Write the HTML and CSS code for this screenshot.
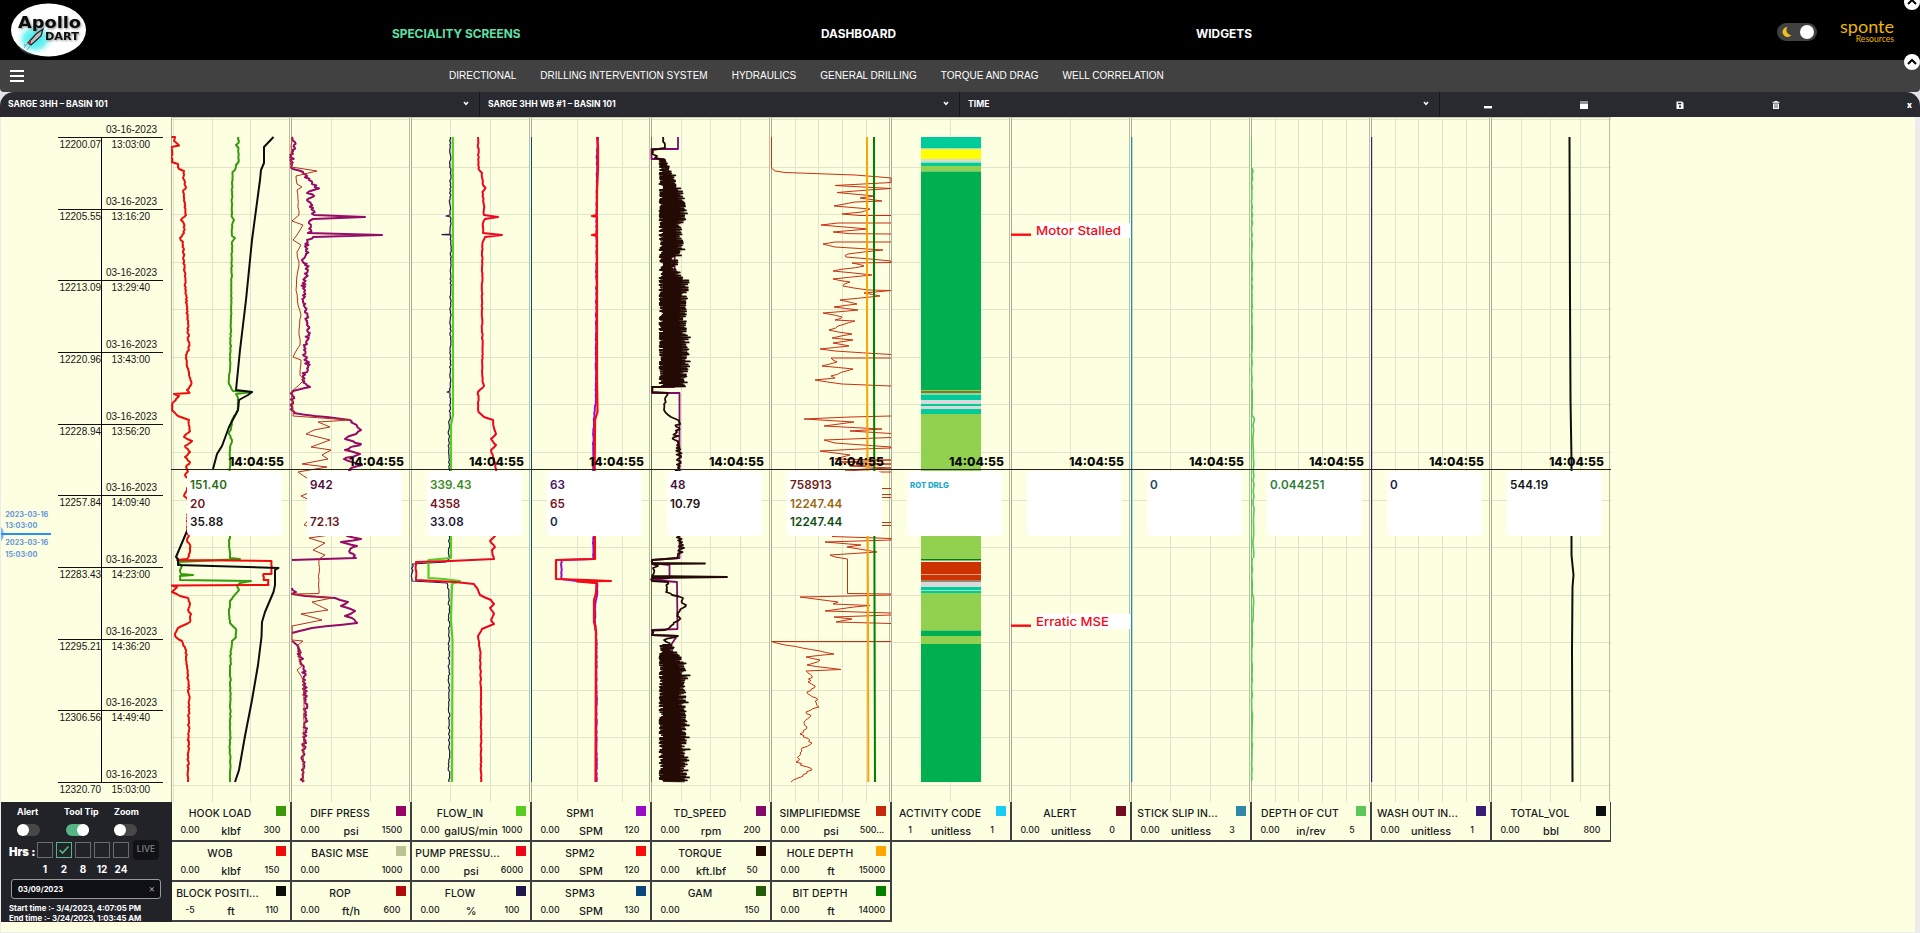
FILE: index.html
```html
<!DOCTYPE html>
<html lang="en">
<head>
<meta charset="utf-8">
<title>Apollo Dart - Drilling Intervention System</title>
<link rel="stylesheet" href="styles.css">
</head>
<body>
<header class="topbar">
  <svg class="logo" width="76" height="54" viewBox="0 0 76 54">
    <defs><radialGradient id="glow"><stop offset="0" stop-color="#2fe8ec"/><stop offset=".55" stop-color="#7df2f4"/><stop offset="1" stop-color="#fff" stop-opacity="0"/></radialGradient></defs>
    <ellipse cx="38.500" cy="27" rx="37.500" ry="26.500" fill="#fff"/>
    <ellipse cx="25" cy="36" rx="20" ry="17" fill="url(#glow)"/>
    <text class="logo-name" x="8" y="25" textLength="63" lengthAdjust="spacingAndGlyphs">Apollo</text>
    <text class="logo-sub" x="35" y="36.500" textLength="34" lengthAdjust="spacingAndGlyphs">DART</text>
    <path d="M33 26l-2 7-10 9-3-2 8-9z" fill="#bbb" stroke="#222" stroke-width="1.2"/>
    <path d="M21 37l-3 3 3 1z" fill="#d22"/>
    <path d="M17 41l-3 4M20 43l-3 4M15 41l-1 2" stroke="#789" stroke-width=".8"/>
  </svg>
  <nav class="main-nav">
    <a class="main-link active">SPECIALITY SCREENS</a>
    <a class="main-link">DASHBOARD</a>
    <a class="main-link">WIDGETS</a>
  </nav>
  <div class="theme-toggle">
    <svg width="10" height="12" viewBox="0 0 10 12"><path d="M5.5 1A5 5 0 1 0 9.300 9.300 5.200 5.200 0 0 1 5.500 1z" fill="#f0c020"/></svg>
    <span class="theme-knob"></span>
  </div>
  <div class="brand"><span class="brand-name">sponte</span><span class="brand-sub">Resources</span></div>
  <svg class="collapse collapse-top" width="16" height="16" viewBox="0 0 16 16"><circle cx="8" cy="8" r="8" fill="#fff"/><path d="M4 10l4-4 4 4" fill="none" stroke="#000" stroke-width="2"/></svg>
  <svg class="collapse collapse-sub" width="16" height="16" viewBox="0 0 16 16"><circle cx="8" cy="8" r="8" fill="#fff"/><path d="M4 10l4-4 4 4" fill="none" stroke="#000" stroke-width="2"/></svg>
</header>
<nav class="subnav">
  <span class="burger"><i></i><i></i><i></i></span>
  <a>DIRECTIONAL</a><a>DRILLING INTERVENTION SYSTEM</a><a>HYDRAULICS</a><a>GENERAL DRILLING</a><a>TORQUE AND DRAG</a><a>WELL CORRELATION</a>
</nav>
<div class="toolbar-back"><div class="toolbar">
  <div class="select">SARGE 3HH – BASIN 101<svg width="6" height="5" viewBox="0 0 6 5"><path d="M1 1l2 2.4L5 1" class="chev"/></svg></div>
  <div class="select">SARGE 3HH WB #1 – BASIN 101<svg width="6" height="5" viewBox="0 0 6 5"><path d="M1 1l2 2.4L5 1" class="chev"/></svg></div>
  <div class="select">TIME<svg width="6" height="5" viewBox="0 0 6 5"><path d="M1 1l2 2.4L5 1" class="chev"/></svg></div>
  <div class="tools">
    <span><svg width="8" height="8" viewBox="0 0 8 8"><path d="M0 5h8v2.4H0z" fill="#fff"/></svg></span>
    <span><svg width="8" height="8" viewBox="0 0 8 8"><path d="M0 .5h8v1H0zM0 2.500h8V8H0z" fill="#fff"/></svg></span>
    <span><svg width="8" height="8" viewBox="0 0 8 8"><path d="M.5.5h5.500l1.500 1.500v6h-7z" fill="#fff"/><path d="M2 1.800h3.400v1.500H2zM3 4.600h2v2H3z" fill="#282a30"/></svg></span>
    <span><svg width="8" height="8" viewBox="0 0 8 8"><path d="M.5.8h7v1h-7zM2.500 0h3v1h-3zM1 2.400h6V8H1z" fill="#fff"/><path d="M3 3.200v4M5 3.200v4" stroke="#282a30" stroke-width=".8"/></svg></span>
    <b class="close">x</b>
  </div>
</div></div>
<main class="board">
  <section class="plots">
    <svg class="axis" id="axis" width="170" height="685" viewBox="1 117 170 685"></svg>
    <div class="tracks">
      <svg id="tracks" width="1440" height="685" viewBox="171 117 1440 685"></svg>
      <div class="cursor" id="cursor"></div>
    </div>
  </section>
  <section class="footer">
    <div class="controls">
      <div class="switches">
        <label class="sw">Alert<i class="track"></i></label>
        <label class="sw">Tool Tip<i class="track on"></i></label>
        <label class="sw">Zoom<i class="track"></i></label>
      </div>
      <div class="hours">
        <b class="hrs">Hrs :</b>
        <span class="hour"><i class="box"></i>1</span>
        <span class="hour"><i class="box checked"><svg width="12" height="10" viewBox="0 0 12 10"><path d="M1.5 5l3 3 6-6.500" fill="none" stroke="#55b584" stroke-width="1.6"/></svg></i>2</span>
        <span class="hour"><i class="box"></i>8</span>
        <span class="hour"><i class="box"></i>12</span>
        <span class="hour"><i class="box"></i>24</span>
        <span class="live">LIVE</span>
      </div>
      <div class="date"><span>03/09/2023</span><span class="clear">×</span></div>
      <div class="range"><div>Start time :- 3/4/2023, 4:07:05 PM</div><div>End time :- 3/24/2023, 1:03:45 AM</div></div>
    </div>
    <div class="legend" id="legend"></div>
  </section>
</main>
<script src="app.js"></script>
</body>
</html>
```
FILE: styles.css
```css
* { box-sizing: border-box; }
body { margin: 0; width: 1920px; height: 933px; overflow: hidden; background: #ececec; font-family: Inter, "Open Sans", sans-serif; }
.topbar { position: relative; height: 60px; background: #000; display: flex; align-items: center; }
.logo { margin: 0 0 0 10px; flex: none; }
.logo text { font-family: "DejaVu Sans", sans-serif; font-weight: bold; }
.logo-name { font-size: 16px; fill: #0b0b0b; filter: drop-shadow(1px 1px 1px #888); }
.logo-sub { font-size: 10.5px; fill: #111; filter: drop-shadow(1px 1px 1px #888); }
.main-nav { display: grid; grid-template-columns: 429px 375px 452px; width: 1256px; margin-left: 306px; font-size: 11.85px; font-weight: 700; color: #fff; padding-top: 7px; }
.main-link { white-space: nowrap; }
.main-link.active { color: #5fe0a8; }
.theme-toggle { margin-left: 129px; margin-top: 4px; width: 40px; height: 18px; border-radius: 9px; background: #414141; display: flex; align-items: center; justify-content: space-between; padding: 0 3px 0 5px; flex: none; }
.theme-knob { width: 14px; height: 14px; border-radius: 50%; background: #fff; }
.brand { margin-left: 24px; margin-top: 1px; width: 53px; display: flex; flex-direction: column; align-items: flex-end; color: #edb600; font-family: Lato, "Open Sans", sans-serif; }
.brand-name { font-size: 18px; line-height: 17px; }
.brand-sub { font-size: 8.6px; line-height: 8px; padding-top: 0; }
.collapse { position: absolute; left: 1904px; z-index: 2; }
.collapse-top { top: -6px; }
.collapse-sub { top: 54px; }
.subnav { height: 32px; background: #414141; border-radius: 0 0 4px 4px; display: flex; align-items: center; gap: 24px; color: #fff; font: 10px "Liberation Sans", Arial, sans-serif; letter-spacing: .01px; padding: 0 0 1px 10px; }
.burger { width: 14px; display: flex; flex-direction: column; gap: 3px; margin-right: 401px; }
.burger i { height: 2px; background: #fff; }
.toolbar-back { background: #e4e4e6; height: 25px; }
.toolbar { height: 25px; background: #282a30; border-radius: 14px 14px 0 0; display: flex; color: #fff; font-size: 8.6px; font-weight: 700; }
.select { width: 480px; border-right: 1px solid #17181c; display: flex; align-items: center; justify-content: space-between; padding: 0 10px 2px 8px; }
.chev { fill: none; stroke: #fff; stroke-width: 1.5; }
.tools { display: flex; flex: 1; align-items: center; }
.tools span { width: 96px; text-align: center; line-height: 0; padding-top: 1px; }
.close { margin-left: 83px; font-size: 8px; }
.board { margin-left: 1px; width: 1914px; height: 815px; background: #fcffe0; display: flex; flex-direction: column; }
.plots { display: flex; height: 685px; }
.axis { font: 10px "Liberation Sans", Arial, sans-serif; fill: #161616; }
.axis .slider { font: 700 7px Inter, sans-serif; fill: #6795dc; }
.tracks { position: relative; width: 1440px; height: 685px; }
.tracks svg, .axis { display: block; }
.note { font: 500 12px Inter, sans-serif; fill: #f00a14; }
.cursor { position: absolute; left: 0; top: 337px; width: 1440px; display: grid; grid-template-columns: repeat(12, 120px); }
.stamp { height: 16px; border-bottom: 1px solid #222; text-align: right; padding-right: 7px; font-size: 12.2px; line-height: 15px; font-weight: 800; color: #080808; }
.tip { width: 95px; height: 65px; margin: 1px 0 0 16px; border-radius: 5px; background: #fff; padding: 5px 3px 0; font-size: 11.7px; line-height: 18.6px; font-weight: 600; letter-spacing: .1px; }
.tip .small { font-size: 7.8px; letter-spacing: 0; font-weight: 800; }
.footer { display: flex; height: 120px; }
.controls { width: 171px; background: #212329; color: #fff; font-weight: 700; overflow: hidden; }
.switches { display: grid; grid-template-columns: 47px 50px 1fr; padding: 4px 0 0 16px; font-size: 8.9px; line-height: 12px; height: 38px; }
.track { display: block; margin-top: 6px; width: 23px; height: 12px; border-radius: 6px; background: #484848; }
.track::before { content: ""; display: block; width: 12px; height: 12px; border-radius: 50%; background: #fff; }
.track.on { background: #55b584; margin-left: 2px; }
.track.on::before { margin-left: 11px; }
.hours { display: flex; gap: 3px; padding: 2px 0 0 8px; height: 37px; font-size: 10px; }
.hrs { width: 25px; font-size: 11.3px; line-height: 21px; white-space: nowrap; }
.hour { width: 16px; text-align: center; line-height: 22px; }
.box { width: 16px; height: 16px; border: 1px solid #686b74; display: flex; align-items: center; justify-content: center; }
.checked { border-color: #55b584; }
.live { margin: -2px 0 0 1px; width: 26px; height: 20px; border-radius: 4px; background: #111215; color: #858585; font-size: 8.5px; font-weight: 500; line-height: 18px; text-align: center; }
.date { margin: 2px 0 0 10px; width: 150px; height: 20px; background: #0f1016; border: 1px solid #999; border-radius: 3px; display: flex; justify-content: space-between; align-items: center; padding: 0 5px 0 6px; font-size: 7.5px; }
.clear { font-size: 10px; font-weight: 300; margin-top: -2px; color: #bbb; }
.range { padding: 4px 0 0 8px; font-size: 7.8px; line-height: 10px; white-space: nowrap; }
.legend { display: grid; grid-template-columns: repeat(12, 120px); grid-template-rows: repeat(3, 40px); grid-auto-flow: column; color: #17191d; width: 1439px; overflow: hidden; }
.cell { border: solid #3f4044; border-width: 0 2px 2px 0; display: grid; grid-template-columns: 36px 46px 36px; grid-template-rows: 23px 15px; text-align: center; font-weight: 500; }
.cell .name { grid-column: 1 / 4; display: flex; justify-content: center; font-size: 10.4px; letter-spacing: .1px; line-height: 24px; padding-right: 22px; white-space: nowrap; position: relative; }
.cell .name.cut { padding-right: 27px; }
.swatch { position: absolute; right: 4px; top: 4px; width: 10px; height: 10px; }
.low, .high { font-size: 8.8px; line-height: 10px; }
.unit { font-size: 10.8px; line-height: 13px; display: flex; justify-content: center; white-space: nowrap; }
```
FILE: app.js
```js
// Seeded generator keeps the sensor jitter identical on every load.
let seed = 7;
const rnd = () => { seed = (seed * 16807) % 2147483647; return seed / 2147483647; };

// "x y x y ..." -> polyline path, jittering long vertical runs.
function trace(str, amp = 0, step = 2) {
  const n = str.trim().split(/\s+/).map(Number);
  let d = `M${n[0]} ${n[1]}`;
  for (let i = 2; i < n.length; i += 2) {
    const [x0, y0, x1, y1] = [n[i - 2], n[i - 1], n[i], n[i + 1]];
    const k = amp ? Math.floor((y1 - y0) / step) : 0;
    for (let j = 1; j < k; j++) {
      d += `L${(x0 + (x1 - x0) * j / k + (rnd() - .5) * 2 * amp).toFixed(1)} ${(y0 + (y1 - y0) * j / k).toFixed(1)}`;
    }
    d += `L${x1} ${y1}`;
  }
  return d;
}
// Dense oscillation between a lower bound and an envelope of [y, max].
function dense(lo, env) {
  let d = '';
  for (let y = env[0][0]; y < env[env.length - 1][0]; y += 1) {
    const i = env.findIndex((e, k) => k && e[0] >= y);
    const [a, b] = [env[i - 1], env[i]];
    const hi = a[1] + (b[1] - a[1]) * (y - a[0]) / (b[0] - a[0]);
    d += `L${(lo + rnd() * rnd() * 8 - 1.5).toFixed(1)} ${y.toFixed(1)}L${(hi - rnd() * 7 + (rnd() > .88 ? 3.5 : 1)).toFixed(1)} ${(y + .4).toFixed(2)}`;
  }
  return d;
}
// Solid core of a dense band.
const core = (lo, env, c) => `<path d="M${lo} ${env[0][0]}${env.map(e => `L${e[1] - 6} ${e[0]}`).join('')}L${lo} ${env[env.length - 1][0]}z" fill="${c}"/>`;
const path = (d, c, w) => `<path d="${d}" fill="none" stroke="${c}" stroke-width="${w}" stroke-linejoin="round"/>`;
const rect = (x, y, w, h, c) => `<rect x="${x}" y="${y}" width="${w}" height="${h}" fill="${c}"/>`;

// ---- grid ----
const ticks = [[173, 212.5, 250.5], [331, 370], [450.5, 490], [577, 622.5], [681, 710.5, 740], [795, 818.5, 842.5, 866], [950.5], [1070.5], [1170.5, 1210], [1275, 1298.5, 1322.5, 1346], [1395, 1418.5, 1442.5, 1466], [1521, 1550.5, 1580]];
let g = '';
for (let y = 119; y < 800; y += 47.57) g += rect(171, Math.round(y), 1440, 1, '#e1e4cb');
ticks.forEach((t, i) => {
  const x = 171 + i * 120;
  t.forEach(v => g += rect(Math.floor(v), 117, 1, 685, '#e1e4cb'));
  g += rect(x - 1, 117, 1, 685, '#fcffe0') + rect(x, 117, 1, 685, '#a9ab98') + rect(x + 118, 117, 1, 685, '#b9bba7');
});
g += rect(171, 117, 1440, 1, '#c5c7b0');

// ---- track 1: hook load, WOB, block position ----
g += path(trace('238.5 137 238.5 143 236 145 238.5 148 238.5 162 236 165 235 170 232.5 172 231.5 216 234 220 232 225 232 236 235 238 232 242 230.5 350 229 384 233 391 252 392 236 394 238 398 238 410 232 420 231 428 229 434 232 440 230 447 230 536 229 542 230 558 240 559 178 562 182 566 180 570 181 574 193 575 180 576 180 580 251 581 240 583 237 586 239 590 233 597 230 601 230 605 229 612 230 623 236 629 236 637 232 641 230.5 652 230 782', .5), '#349a0c', 2);
g += path(trace('171.5 137 175 137 174 141 179 145.5 171.5 147 171.5 162 178 164 179 169 184 171 183 178 186 187 183 192 186 215 181 220 184 224 184 233 180 238 183 242 184 262 187 310 189 350 186 355 189 375 191.5 383 187 390 189.5 393 174 394 179 396 176 399 172 405 172 410 178 416 189 420 190 431 184 437 192 441 185 446 190 452 185 457 190 462 186 467 188 472 185 475 189 480 187 490 184 496 188 500 187 530 189 536 187 540 190 545 189 556 187 559 177 560 271.5 561 271.5 574 263.5 574 263.5 580 268.5 580 268.5 585 171.5 585.5 177 587 172 592 180 596 188 598 190 604 188 610 191 614 190 622 178 628 175 635 177 638 182 641 186 650 187 667 189 695 188 782', .8, 1.5), '#f00c0c', 2);
g += path(trace('273.5 137 264 147 264 163 261 170 260 180 252 240 246 300 240 350 236 390 252 392 248 395 239 400 238 410 229 427 222 446 217 454 213 469'), '#0c0c0c', 2);
g += path(trace('187 531 176 557 178 559 178 565 278.5 568 275 570 275 585 273.5 592 265 612 262 622 261.5 637 258 665 252 700 245 736 239 770 235 782'), '#0c0c0c', 2);

// ---- track 2: differential pressure, ROP ----
g += path(trace('292 137 294 145 292.5 150 292 165 293 169 303 172 309 180 312 184 319 188.5 307 193 314 196 307 200 313 208 314 215 365 217 313 219 309 222 311 230 308 233 382 235 313 237 307 240 306 255 303 259 308 270 303 288 306 310 308 332 304 350 308 366 303 377 306 384 310 387 293 391 292.5 408 294 413 315 416 350 420 357 426 361 430 356 434 345 439 361 444 345 450 360 454 344 459 362 465 350 469 360 500 347 536 361 539 341 542 357 546 350 550 356 558 292 560', 2.2, 1.2), '#960a68', 2);
g += path(trace('292 588 296 592 292 594 305 596 335 598 348 602 341 606 355 611 345 616 352 618 357 623 312 628 292 633', 1.5, 1.5) + trace('292 641 297 645 300 655 304 670 305 690 306 720 303 760 302 782', 2, 1.2), '#960a68', 2);
g += path(trace('291.5 137 291.5 167 317 171 296 176 297 184 302 187 297 190 299 215 292 221 303 225 300 230 293 240 301 245 297 252 299 262 296 290 298 305 301 315 299 330 300 345 293 357 301 360 300 375 304 380 292 391 293 416 350 420 318 422 330 427 314 430 306 434 330 440 311 447 331 450 322 455 328 459 302 464 327 467 298 472 310 480 320 488 301 496 320 505 304 525 330 535 309 538 325 543 313 550 325 555 319 559 319 593.5 292 594 332 598 312 602 328 610 301 614 322 620 292 626 292 640 303 641 298 645 301 652 299 660 303 665 297 670 303 680 304 700 303 782', .6, 4), '#b8301f', 1);

// ---- track 3: flow, flow in, pump pressure ----
g += path(trace('450.5 137 450 215 446 216 450.5 217 450 234 442 234.6 451 235 450 391 447 392 450 393 450 415 449 430 449 559 446 562 412.5 564 412 581 447 583 449 590 449 782', .8), '#221a50', 1.2);
g += path(trace('452.8 137 453 415 451 425 451 558 428.5 560 428.5 578 444 579 460 581 452 584 451.5 600 451 620 452.5 640 452 782'), '#55cf24', 2.2);
g += path(trace('478 137 478.5 169 482 173 483 185 485.5 188 482.5 192 484 205 484 215 498 217 485 219 483 223 483 233 502 235 485 237 482.5 243 482 300 482.5 380 484 386 478 392 478.5 412 484 417 493 420 494 428 496 434 491 439 496 445 491 450 494 459 496 469 495 536 490 541 495 547 492 550 494 559 450 561 416 562 416 580 455 582 474 584 478 590 480 595 491 600 494 604 490 608 494 614 491 620 494 624 482 629 478 636 480 650 481 700 481 782', .5), '#f0041e', 2);

// ---- track 4: stroke counts ----
g += rect(531, 137, 1, 645, '#0a4a7c');
g += path(trace('598 137 597 150 596.3 300 595.8 400 593.3 430 593.3 559 561.5 560 561.5 579 577 581 597 583 597 595 595 605 595 622 596.5 640 596.5 782', .4), '#980cc8', 2);
g += path(trace('597 137 598 147 598 170 597 190 596.8 215 592 216 597 217 597 234 592 235 597 236 597 380 597.5 412 595 420 594.7 469 595 559 556 560 556 579 588 580 611 581 577 581.5 596.5 583 596 593 594 600 594 622 596 630 595.5 782'), '#f80a14', 2.2);

// ---- track 5: speed and torque ----
const torque = '#230a04';
const bandA = [[160, 666], [175, 672], [187, 679], [190, 683], [205, 685], [217, 687], [226, 681], [250, 684], [257, 677], [273, 677], [280, 688], [320, 685], [350, 688], [387, 686]];
const bandB = [[645, 672], [655, 678], [667, 685], [680, 687], [700, 684], [720, 687], [781.5, 686]];
g += rect(651, 137, 1, 645, '#5a7a48');
g += path(trace('678 137 678 149 651.5 149 651.5 159 664 159 672 180 675 200 674 387 652 387 652 393 679.5 393 679.5 558 652 560 652 563 669.5 565 669.5 578 652 580 677 582 677.5 629 652 630 652 635 677 636 671 645 674 660 674 780'), '#820a6c', 1.8);
g += core(663, bandA, torque) + core(663, bandB, torque);
g += path(trace('663 137 665 148 652 150 652 154 657 156 655 158 665 160', 1)
  + dense(661, bandA)
  + trace('652 387 652 392 668 393 665 400 664 410 671 417 678 420', 1).replace('M', 'L')
  + trace('678 420 679 428 675 440 679 452 677 460 679 469 679 536 683 545 678 555 678 558', 3.5, 1.3).replace('M', 'L')
  + trace('652 560 652 563 705 563.5 652 564 658 566 653 568 652 576 727 577 652 578 652 581 668 582 667 588 666 592 672 595 683 598 682 603 686 605 679 612 679 620 670 627 665 630 652 630.5 652 635 678 636 664 640 670 645', 2, 1.3).replace('M', 'L')
  + dense(661, bandB), torque, 1.8);

// ---- track 6: MSE and depths ----
const mse = '#c93010';
g += path(trace('771.5 137 771.5 168 775 171 785 172.5 855 175 880 177 891 178 891 182.5 835 185.5 891 188.5 868 190 837 192.5 875 196 860 198 882 201 855 202 834 206 870 209 862 212 842 214 860 215.5 891 215.5'), mse, 1);
g += path(trace('891 223 838 223 821 225 868 229 833 232 850 233.7 891 234'), mse, 1);
g += path(trace('891 242 835 242 823 244 835 247 883 250 848 254 846 257 870 259 891 261 891 262.5 852 263 864 266 833 271 872 275 833 279 850 282 843 286 854 288 868 290 891 290.5 864 293 880 296 840 300 857 304 834 307 858 310 823 313 842 317 835 320 855 321 838 326 829 330 852 334 832 338 853 340 833 343 849 346 820 349 835 351 891 354.5', 2.5, 1.5), mse, 1);
g += path(trace('891 358 831 358 837 362 822 366 853 369 831 376 835 378 815 380 842 384 891 386', 2, 1.5), mse, 1);
g += path(trace('891 416 850 417 804 419 854 422 824 426 882 429 850 431 891 433.5'), mse, 1);
g += path(trace('891 437.5 824 440 835 443 891 447 891 448 860 449 820 451 850 455 835 459 891 460 840 462 891 464 850 466 891 468 845 470 880 472 891 472'), mse, 1);
[488, 494, 497, 522, 525].forEach(y => g += rect(870, y, 21, 1, mse));
g += path(trace('832 536.5 891 538.5 891 540 825 542 861 545 847 547 877 552 830 555 835 557 847.5 559 847.5 593.5 891 594'), mse, 1);
g += path(trace('891 595 850 596 800 597 838 602 833 604 870 605.5 854 607 825 611 891 613'), mse, 1);
g += path(trace('891 615 834 617 852 619 836 622 891 623.5'), mse, 1);
g += path(trace('891 641.5 771.5 641.5 785 645 820 651 834 654 806 657 820 660 807 665 841 669.5 806 671 812 676 808 682 815 686 807 692 816 698 819 707 806 712 810 717 804 722 807 727 800 734 812 743 802 748 800 753 796 762 812 770 798 778 791 782', 2.5, 1.5), mse, 1);
g += path('M867 137L867 340L868 600L868.3 782', '#ffa500', 2) + path('M874 137L874 340L874.5 600L875 782', '#008000', 2);

// ---- track 7: activity codes ----
const T = '#00cc99', L = '#92d050', G = '#00b050', S = '#d9d9d9', R = '#cc3300';
[[137, T], [148, '#a6dcb0'], [149.5, '#ffff00'], [159, S], [161.5, '#8fdcb8'], [163, T], [166, L], [171.5, G], [390, L], [391, '#7a7a30'], [393.5, '#8fd9b0'], [394.7, T], [400, S], [404, T], [406, S], [409, T], [414, L], [559, '#0a7a10'], [560.7, '#e6f0d8'], [562, R], [574, '#e8a080'], [575, R], [580, '#99826a'], [582, S], [587, T], [590, '#9fe0cc'], [591, T], [593, L], [630.5, G], [636, L], [644, G], [782]]
  .forEach(([y, c], i, a) => { if (c) g += rect(921, y, 60, a[i + 1][0] - y, c); });

// ---- track 8: alerts ----
[[223, 'Motor Stalled', 85], [614, 'Erratic MSE', 73]].forEach(([y, t, w]) => {
  g += rect(1011, y + 10.5, 20, 2.4, '#ff0a14') + rect(1036, y, 94, 15, '#fff') + `<text class="note" x="1036" y="${y + 12}" textLength="${w}" lengthAdjust="spacingAndGlyphs">${t}</text>`;
});

// ---- tracks 9-12 ----
g += rect(1131, 137, 1.3, 645, '#2d88a8') + rect(1371, 137, 1.2, 645, '#3c1e70') + rect(1251, 137, 1, 645, '#5cc55c');
g += path(trace('1252 168 1253 171 1252 175 1252 415 1254.5 419 1253 425 1253.5 460 1253.5 558', .6, 4) + trace('1252.2 558 1252 592 1253.5 598 1253 620 1252 625 1252 780', .5, 5), '#5cc55c', 1.6);
g += path(trace('1569.5 137 1570 300 1570.5 400 1571.5 460 1571.5 555 1573.5 575 1572.5 587 1572 650 1572.5 782'), '#0a1010', 2);
document.getElementById('tracks').innerHTML = g;

// ---- depth / time axis ----
const depth = ['12200.07', '12205.55', '12213.09', '12220.96', '12228.94', '12257.84', '12283.43', '12295.21', '12306.56', '12320.70'];
const times = ['13:03:00', '13:16:20', '13:29:40', '13:43:00', '13:56:20', '14:09:40', '14:23:00', '14:36:20', '14:49:40', '15:03:00'];
let a = rect(101, 137, 1, 645, '#000');
depth.forEach((v, i) => {
  const y = 137 + i * 71.65;
  a += rect(58, Math.round(y), 105, 1, '#111');
  a += `<text x="106" y="${Math.round(y - 4)}" textLength="51">03-16-2023</text><text x="59.5" y="${Math.round(y + 11)}" textLength="41.5">${v}</text><text x="111.5" y="${Math.round(y + 11)}" textLength="38.5">${times[i]}</text>`;
});
a += '<circle cx="-6" cy="534" r="10" fill="#7db8f5"/>' + rect(1, 533, 50, 2, '#2490ff');
[['2023-03-16', 517, 43], ['13:03:00', 528, 32], ['2023-03-16', 545, 43], ['15:03:00', 556.5, 32]].forEach(([t, y, w]) => a += `<text class="slider" x="5.3" y="${y}" textLength="${w}" lengthAdjust="spacingAndGlyphs">${t}</text>`);
document.getElementById('axis').innerHTML = a;

// ---- cursor read-outs ----
const tips = [
  [['151.40', '#2a6a12'], ['20', '#6c1414'], ['35.88', '#161616']],
  [['942', '#4c0c3c'], ['', '#000'], ['72.13', '#641414']],
  [['339.43', '#3d8a22'], ['4358', '#74141c'], ['33.08', '#1c1a34']],
  [['63', '#4a1464'], ['65', '#741418'], ['0', '#10304c']],
  [['48', '#3c1038'], ['10.79', '#1a0e0c']],
  [['758913', '#6e2014'], ['12247.44', '#98680c'], ['12247.44', '#0c4c10']],
  [['ROT DRLG', '#18a8c8', 'small']], [], [['0', '#1c4458']], [['0.044251', '#2f7a34']], [['0', '#281848']], [['544.19', '#101414']]];
document.getElementById('cursor').innerHTML =
  tips.map(() => '<div class="stamp">14:04:55</div>').join('') +
  tips.map(t => `<div class="tip">${t.map(([v, c, k]) => `<div class="${k || ''}" style="color:${c}">${v || '&nbsp;'}</div>`).join('')}</div>`).join('');

// ---- legend ----
const legend = [
  ['HOOK LOAD', '0.00', 'klbf', '300', '#3a9a0c'], ['WOB', '0.00', 'klbf', '150', '#f00c0c'], ['BLOCK POSITI...', '-5', 'ft', '110', '#0c0c0c'],
  ['DIFF PRESS', '0.00', 'psi', '1500', '#960468'], ['BASIC MSE', '0.00', '', '1000', '#b9c492'], ['ROP', '0.00', 'ft/h', '600', '#b00c0c'],
  ['FLOW_IN', '0.00', 'galUS/min', '1000', '#58ce24'], ['PUMP PRESSU...', '0.00', 'psi', '6000', '#f0041a'], ['FLOW', '0.00', '%', '100', '#20184c'],
  ['SPM1', '0.00', 'SPM', '120', '#980cc8'], ['SPM2', '0.00', 'SPM', '120', '#f80c0c'], ['SPM3', '0.00', 'SPM', '130', '#0a487c'],
  ['TD_SPEED', '0.00', 'rpm', '200', '#820a6c'], ['TORQUE', '0.00', 'kft.lbf', '50', '#230a04'], ['GAM', '0.00', '', '150', '#245a0c'],
  ['SIMPLIFIEDMSE', '0.00', 'psi', '500...', '#c6280c'], ['HOLE DEPTH', '0.00', 'ft', '15000', '#ffa500'], ['BIT DEPTH', '0.00', 'ft', '14000', '#008000'],
  ['ACTIVITY CODE', '1', 'unitless', '1', '#18ccf4'], 0, 0, ['ALERT', '0.00', 'unitless', '0', '#740c24'], 0, 0,
  ['STICK SLIP IN...', '0.00', 'unitless', '3', '#2f88a8'], 0, 0, ['DEPTH OF CUT', '0.00', 'in/rev', '5', '#5cc85c'], 0, 0,
  ['WASH OUT IN...', '0.00', 'unitless', '1', '#3a1c78'], 0, 0, ['TOTAL_VOL', '0.00', 'bbl', '800', '#0a1012'], 0, 0];
document.getElementById('legend').innerHTML = legend.map(c => c
  ? `<div class="cell"><div class="name${c[0].endsWith('...') ? ' cut' : ''}">${c[0]}<i class="swatch" style="background:${c[4]}"></i></div><div class="low">${c[1]}</div><div class="unit">${c[2]}</div><div class="high">${c[3]}</div></div>`
  : '<div></div>').join('');
```
